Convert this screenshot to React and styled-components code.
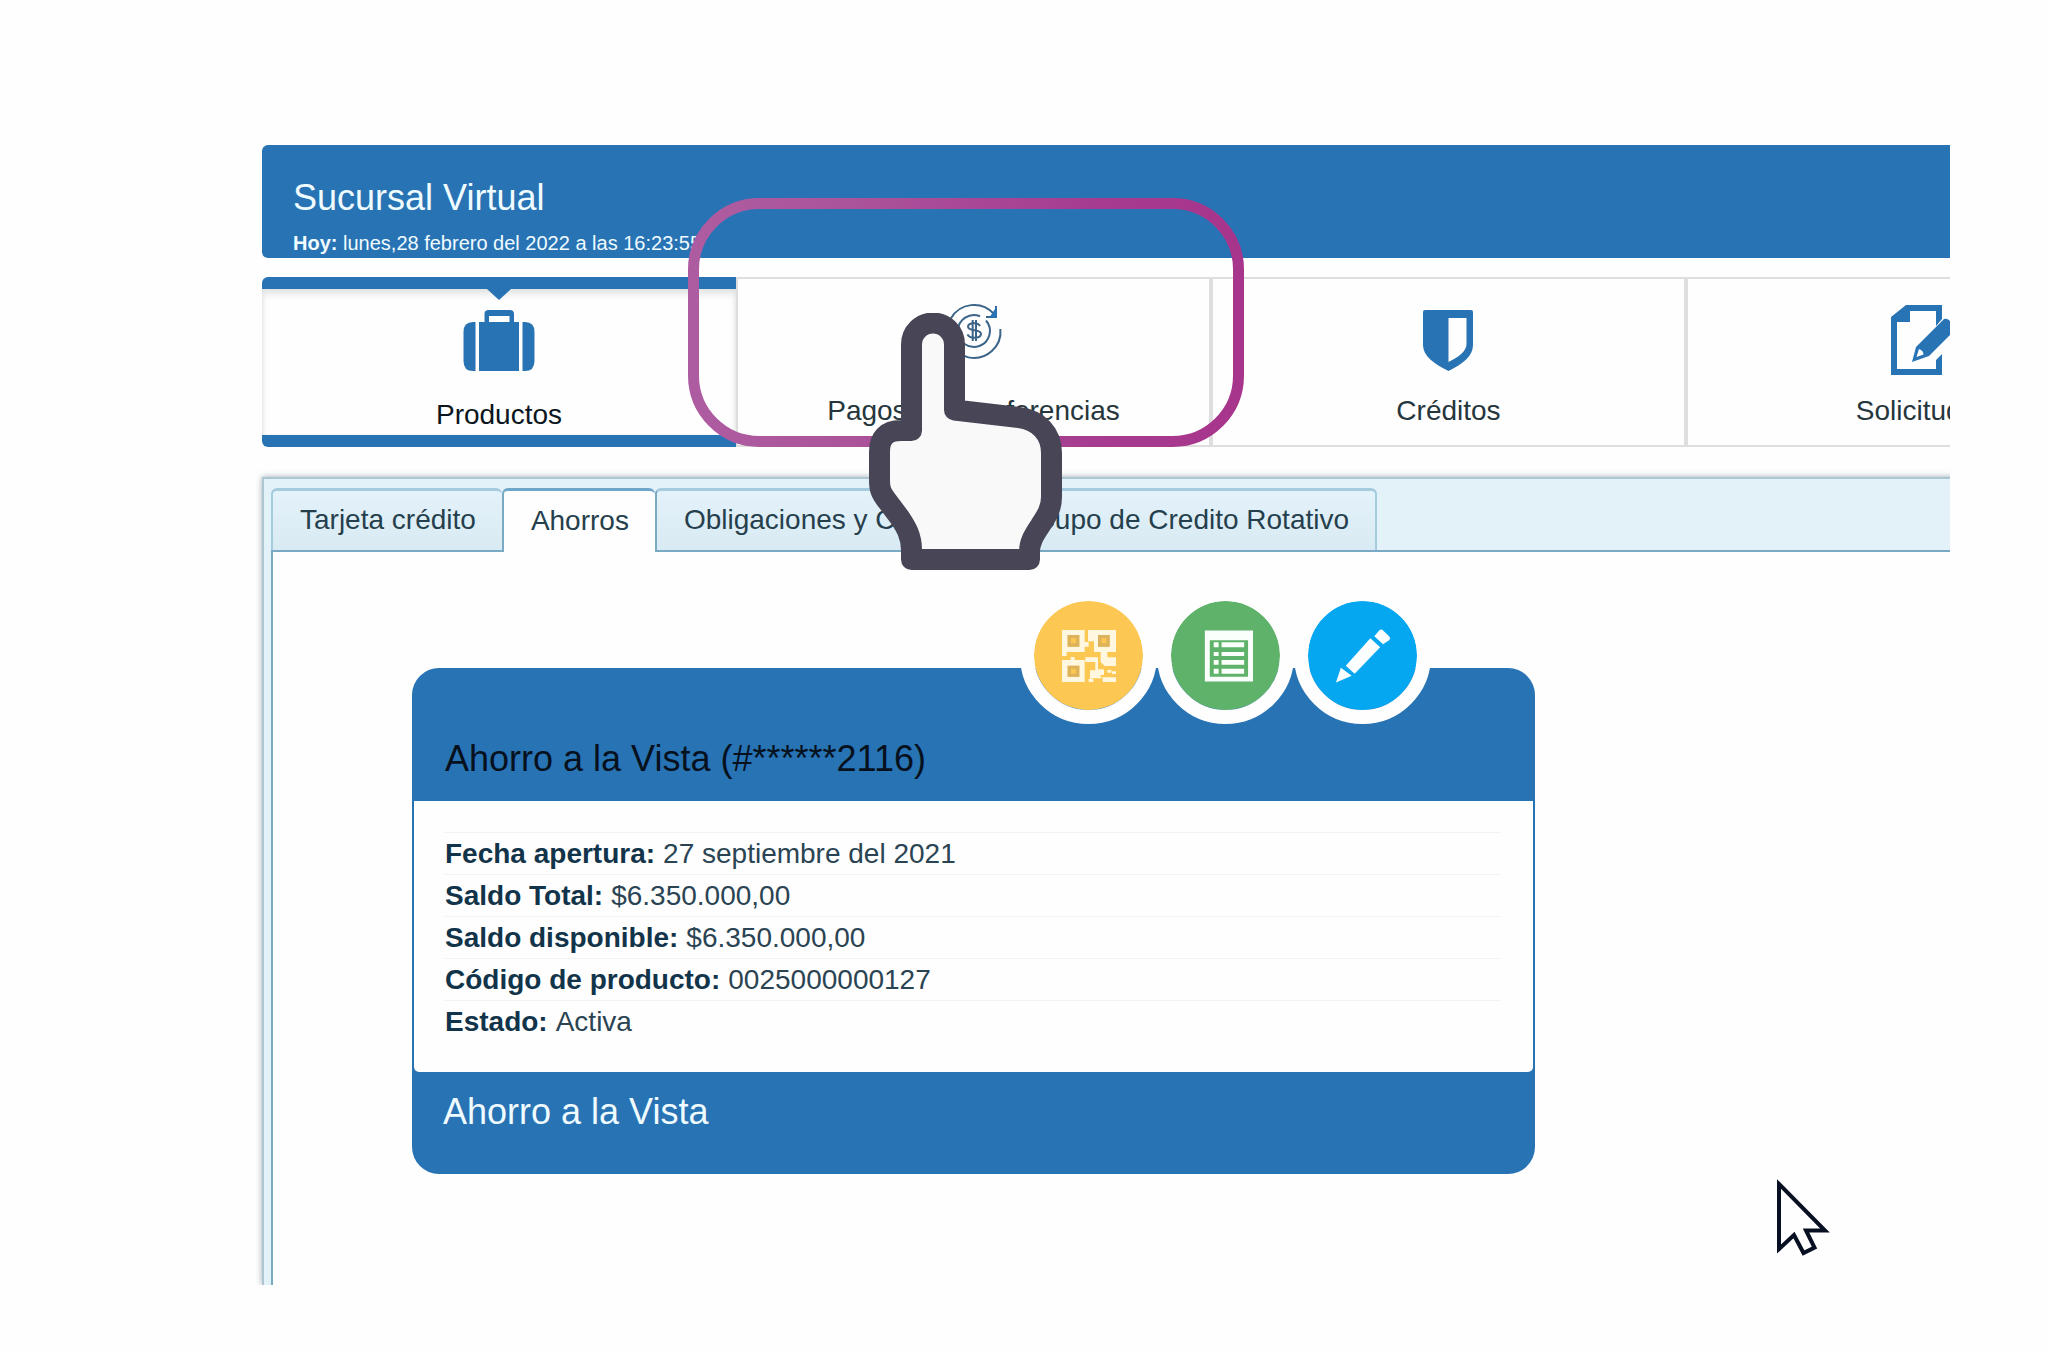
import React, { useState } from 'react';
import styled, { createGlobalStyle, css } from 'styled-components';

const blue = '#2873b4';
const line = '#dedede';
const tabLine = '#7aa9c3';

const GlobalStyle = createGlobalStyle`
    * {
        box-sizing: border-box;
    }

    body {
        margin: 0;
        background: #fefefe;
        color: #1f3340;
        font-family: "Liberation Sans", Arial, sans-serif;
        font-size: 28px;
    }
`;

const Shell = styled.main`
    position: relative;
    margin: 145px 98px 65px 256px;
    padding-left: 6px;
    overflow: hidden;
`;

const Header = styled.header`
    padding: 33px 31px 3px;
    border-radius: 6px 0 0 6px;
    background: ${blue};
    color: #effbff;
`;

const Title = styled.h1`
    margin: 0 0 13px;
    font-size: 36px;
    font-weight: 400;
    line-height: 40px;
`;

const Today = styled.p`
    margin: 0;
    font-size: 20px;
    line-height: 24px;
`;

const Nav = styled.nav`
    position: relative;
    display: flex;
    margin-top: 19px;
`;

const NavItem = styled.button`
    position: relative;
    display: flex;
    flex: 0 0 475px;
    flex-direction: column;
    align-items: center;
    justify-content: flex-start;
    gap: 20px;
    height: 170px;
    padding: 26px 0 0;
    border: solid ${line};
    border-width: 2px 4px 2px 0;
    background: #fefefe;
    color: #26363d;
    font: inherit;
    line-height: 32px;
    cursor: pointer;

    ${({ $active }) => $active && css`
        flex-basis: 474px;
        gap: 24px;
        padding-top: 16px;
        border: solid ${blue};
        border-width: 12px 0;
        border-radius: 6px 0 0 6px;
        box-shadow: inset 0 8px 10px -4px #dcdfde, inset 3px 0 4px -2px #e4e6e6, inset -3px 0 4px -2px #e4e6e6;
        color: #0b1620;

        &::before {
            content: '';
            position: absolute;
            top: 0;
            left: calc(50% - 12px);
            border: solid transparent;
            border-width: 11px 12px 0;
            border-top-color: ${blue};
        }

        & + button {
            flex-basis: 477px;
            border-left-width: 2px;
        }
    `}
`;

const NavIcon = styled.svg`
    display: block;
    width: 70px;
    height: 70px;
    flex-shrink: 0;
    overflow: visible;
`;

const Highlight = styled.svg`
    position: absolute;
    top: -79px;
    left: 426px;
    z-index: 2;
    width: 556px;
    height: 249px;
    pointer-events: none;
`;

const Hand = styled.svg`
    position: absolute;
    top: 36px;
    left: 607px;
    z-index: 3;
    width: 193px;
    height: 257px;
    pointer-events: none;
`;

const Panel = styled.section`
    margin: 30px -12px 0 0;
    padding: 9px 12px 0 7px;
    border: solid #adc6d3;
    border-width: 2px 0 0 2px;
    background: #e3f1f8;
    box-shadow: 0 0 6px rgba(70, 90, 100, 0.5);
`;

const Tabs = styled.div`
    display: flex;
`;

const Tab = styled.button`
    padding: 13px 26px 14px 27px;
    border: solid #a5cbdf;
    border-width: 3px 0 0 2px;
    border-radius: 6px 6px 0 0;
    background: linear-gradient(#e4f2fa, #d8eaf3);
    color: #263f4d;
    font: inherit;
    line-height: 32px;
    white-space: nowrap;
    cursor: pointer;

    &:last-child {
        border-right-width: 2px;
    }

    ${({ $active }) => $active && css`
        position: relative;
        z-index: 1;
        margin-bottom: -2px;
        border-color: #6ea6ca ${tabLine} ${tabLine};
        background: #fefefe;

        & + button {
            border-left-color: ${tabLine};
        }
    `}
`;

const TabContent = styled.div`
    position: relative;
    padding: 116px 0 111px 139px;
    border: solid ${tabLine};
    border-width: 2px 0 0 2px;
    background: #fefefe;
`;

const Card = styled.article`
    position: relative;
    width: 73%;
    border-radius: 27px;
    background: ${blue};
`;

const CardTitle = styled.h2`
    margin: 0;
    padding: 71px 33px 22px;
    color: #06111d;
    font-size: 36px;
    font-weight: 400;
    line-height: 40px;
`;

const Details = styled.dl`
    margin: 0 2px;
    padding: 31px 32px 30px 31px;
    border-radius: 0 0 5px 5px;
    background: #fefefe;
`;

const DetailRow = styled.div`
    display: flex;
    gap: 8px;
    border-top: 1px solid #eff3f5;
    line-height: 41px;
`;

const DetailName = styled.dt`
    color: #12344a;
    font-weight: 700;
`;

const DetailValue = styled.dd`
    margin: 0;
    color: #2a4453;
`;

const CardFooter = styled.footer`
    padding: 20px 31px 42px;
    color: #effbff;
    font-size: 36px;
    line-height: 40px;
`;

const Actions = styled.div`
    position: absolute;
    top: -81px;
    right: 104px;
    display: flex;
`;

const ActionButton = styled.button`
    display: flex;
    align-items: center;
    justify-content: center;
    width: 137px;
    height: 137px;
    padding: 0;
    border: 14px solid #fefefe;
    border-radius: 50%;
    background: ${({ $color }) => $color};
    background-clip: padding-box;
    cursor: pointer;
`;

const ActionIcon = styled.svg`
    display: block;
    width: 56px;
    height: 56px;
`;

const Pointer = styled.svg`
    position: absolute;
    right: 120px;
    bottom: 28px;
    width: 54px;
    height: 78px;
    overflow: visible;
`;

const SuitcaseIcon = () => (
    <NavIcon viewBox="0 0 70 70" fill={blue} aria-hidden="true">
        <path d="M9 17h2.500v49H9Q-.5 66-.5 56V27Q-.5 17 9 17z" />
        <path d="M61 17h-2.500v49H61q9.500 0 9.500-10V27Q70.500 17 61 17z" />
        <path fillRule="evenodd" d="M15 17h5.500V9q0-4 4-4h21.500q4 0 4 4v8h5v49H15zM25 11v6h20.500v-6z" />
    </NavIcon>
);

const TransferIcon = () => (
    <NavIcon viewBox="0 0 70 70" fill="none" stroke="#3b6488" strokeWidth="2" aria-hidden="true">
        <path d="M54.500 8.500A26.500 26.500 0 1 0 61.400 24" />
        <path d="M41 11.200A16 16 0 1 0 47 15.500" />
        <path d="M57 1v11H47" />
        <path d="M58 1v12H50z" fill={blue} stroke="none" />
        <path d="M41 21c-1-2-3-2.800-6-2.800-4 0-6 1.300-6 3.600 0 4.800 13 2.200 13 7 0 2.600-2.700 4-6.500 4-3.500 0-6-1.200-7-3.400M33.700 15v21M37 15v21" />
    </NavIcon>
);

const ShieldIcon = () => (
    <NavIcon viewBox="0 0 70 70" fill={blue} aria-hidden="true">
        <path fillRule="evenodd" d="M11 5h46q2 0 2 2v33c0 11-10 19-24.500 26C20 59 9 51 9 40V7q0-2 2-2zM34.500 13v44C45 52 52.500 46 52.500 39V13z" />
    </NavIcon>
);

const RequestIcon = () => (
    <NavIcon viewBox="-2 0 70 70" fill={blue} aria-hidden="true">
        <path d="M15 0h36v14l-6 7V6H19v11H6v47h39V55l6-6v21H0V12z" />
        <path d="M53 14q3-1 6 2l4 4q3 3 0 6L38 51l-17 6 4-15zM28 44l-2.500 8 7-2.500q0-4-4.500-5.500z" fillRule="evenodd" />
    </NavIcon>
);

const QrIcon = () => (
    <ActionIcon viewBox="-6 -6 168 168" fill="#fff7df" aria-hidden="true">
        <path fillRule="evenodd" d="M0 0h68v36h12v14H68v16H14v12H0zM17 15v35h35V15z" />
        <path fillRule="evenodd" d="M78 0h84v66h-26v16h26v26h-34l-12-12V66H96V34H78zM108 15v35h35V15z" />
        <path fillRule="evenodd" d="M0 90h26v-9h12v9h30v66H0zM17 107v33h35v-33z" />
        <path d="M70 82h38v36h18v17h-12l6 10h-36v-24h16V96H70zM136 120h12v8h-12zM150 124h12v8h-12zM80 146h14v10H80zM122 142h40v14h-40z" />
        <path fillRule="evenodd" fill="#dcb35a" d="M17 15h35v35H17zM27 25v15h15V25z" />
        <path fillRule="evenodd" fill="#dcb35a" d="M108 15h35v35h-35zM118 25v15h15V25z" />
        <path fillRule="evenodd" fill="#dcb35a" d="M17 107h35v33H17zM27 116v15h15v-15z" />
    </ActionIcon>
);

const ListIcon = () => (
    <ActionIcon viewBox="-8 -2 57 56" fill="#fbfffb" aria-hidden="true">
        <path fillRule="evenodd" d="M0 0h49v52H0zM5 10v37h39V10z" />
        <path d="M9 12h5v5H9zM17 12h23v5H17zM9 22h5v4H9zM17 22h23v4H17zM9 30h5v5H9zM17 30h23v5H17zM9 39h5v5H9zM17 39h23v5H17z" />
    </ActionIcon>
);

const PencilIcon = () => (
    <ActionIcon viewBox="-2 0 57 56" fill="#fcffff" aria-hidden="true">
        <path d="M0 55L5 40l11 8z" />
        <path d="M10 38L35 10l10 9-26 27z" />
        <path d="M39 8l5-6q2-2 4 0l6 6q2 2 0 4l-6 4z" />
    </ActionIcon>
);

const navItems = [
    { id: 'productos', label: 'Productos', Icon: SuitcaseIcon },
    { id: 'pagos', label: 'Pagos y Transferencias', Icon: TransferIcon },
    { id: 'creditos', label: 'Créditos', Icon: ShieldIcon },
    { id: 'solicitudes', label: 'Solicitudes', Icon: RequestIcon },
];

const tabs = ['Tarjeta crédito', 'Ahorros', 'Obligaciones y Créditos', 'Cupo de Credito Rotativo'];

const details = [
    ['Fecha apertura:', '27 septiembre del 2021'],
    ['Saldo Total:', '$6.350.000,00'],
    ['Saldo disponible:', '$6.350.000,00'],
    ['Código de producto:', '0025000000127'],
    ['Estado:', 'Activa'],
];

const actions = [
    { label: 'Código QR', color: '#fcc853', Icon: QrIcon },
    { label: 'Movimientos', color: '#5fb269', Icon: ListIcon },
    { label: 'Editar', color: '#06a7f1', Icon: PencilIcon },
];

const App = () => {
    const [section, setSection] = useState('productos');
    const [tab, setTab] = useState('Ahorros');

    return (
        <>
            <GlobalStyle />
            <Shell>
                <Header>
                    <Title>Sucursal Virtual</Title>
                    <Today><b>Hoy:</b> lunes,28 febrero del 2022 a las 16:23:55</Today>
                </Header>

                <Nav>
                    {navItems.map(({ id, label, Icon }) => (
                        <NavItem key={id} type="button" $active={section === id} onClick={() => setSection(id)}>
                            <Icon />
                            <span>{label}</span>
                        </NavItem>
                    ))}
                    <Highlight viewBox="0 0 556 249" fill="none" aria-hidden="true">
                        <defs>
                            <linearGradient id="ring" x1="0" x2="1" y1="0" y2="0">
                                <stop offset="0" stopColor="#ae5ca1" />
                                <stop offset="0.25" stopColor="#ab559c" />
                                <stop offset="0.75" stopColor="#a63b8f" />
                                <stop offset="1" stopColor="#a7358b" />
                            </linearGradient>
                        </defs>
                        <rect x="5.500" y="5.500" width="545" height="238" rx="66" stroke="url(#ring)" strokeWidth="11" />
                    </Highlight>
                    <Hand viewBox="869 313 193 257" fill="#f9f9f9" stroke="#474556" strokeWidth="21" strokeLinejoin="round" aria-hidden="true">
                        <path d="M911.500 344.500a21.500 21.500 0 0 1 43 0V410L1019 417.500C1038 420 1051.500 433 1051.500 453V497C1051.500 510 1045 518 1040 526C1034 535 1029.500 542 1029.500 552V559.500H911.500V550C911.500 536 906 527 900 518L888 502C880 492 879.500 488 879.500 480V452Q879.500 430.500 901 430.500H911.500z" />
                    </Hand>
                </Nav>

                <Panel>
                    <Tabs role="tablist">
                        {tabs.map((name) => (
                            <Tab
                                key={name}
                                type="button"
                                role="tab"
                                aria-selected={tab === name}
                                $active={tab === name}
                                onClick={() => setTab(name)}
                            >
                                {name}
                            </Tab>
                        ))}
                    </Tabs>
                    <TabContent role="tabpanel">
                        <Card>
                            <CardTitle>Ahorro a la Vista (#******2116)</CardTitle>
                            <Details>
                                {details.map(([name, value]) => (
                                    <DetailRow key={name}>
                                        <DetailName>{name}</DetailName>
                                        <DetailValue>{value}</DetailValue>
                                    </DetailRow>
                                ))}
                            </Details>
                            <CardFooter>Ahorro a la Vista</CardFooter>
                            <Actions>
                                {actions.map(({ label, color, Icon }) => (
                                    <ActionButton key={label} type="button" aria-label={label} $color={color}>
                                        <Icon />
                                    </ActionButton>
                                ))}
                            </Actions>
                        </Card>
                        <Pointer viewBox="1776 1179 54 78" fill="#fefefe" stroke="#071022" strokeWidth="4" aria-hidden="true">
                            <path d="M1779 1184L1825 1230.500H1806L1814.500 1247.500L1803.500 1253L1794 1235L1779 1249z" />
                        </Pointer>
                    </TabContent>
                </Panel>
            </Shell>
        </>
    );
};

export default App;
